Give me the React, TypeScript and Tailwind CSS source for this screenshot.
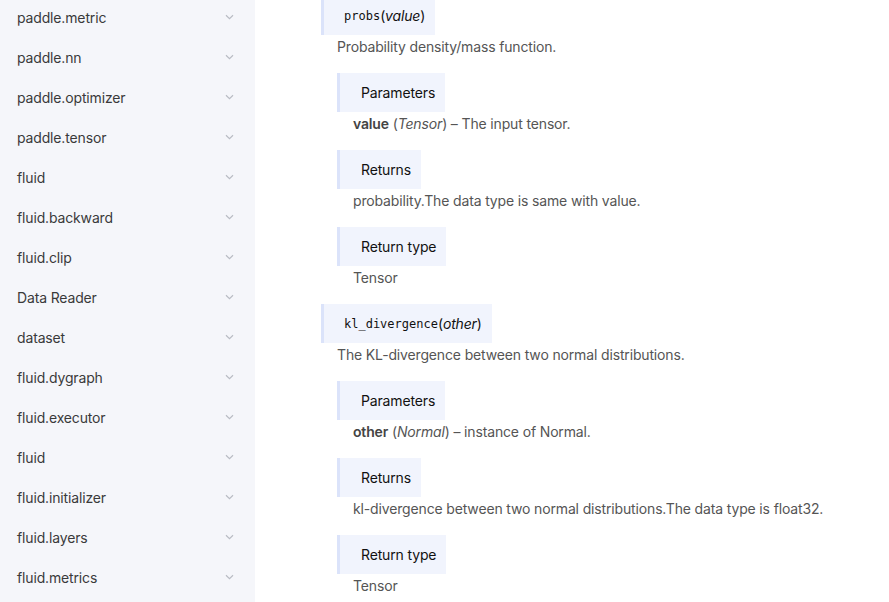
import React from "react";

const navItems = [
  "paddle.metric",
  "paddle.nn",
  "paddle.optimizer",
  "paddle.tensor",
  "fluid",
  "fluid.backward",
  "fluid.clip",
  "Data Reader",
  "dataset",
  "fluid.dygraph",
  "fluid.executor",
  "fluid",
  "fluid.initializer",
  "fluid.layers",
  "fluid.metrics",
];

function Chevron() {
  return (
    <svg width="9" height="6" viewBox="0 0 9 6" className="text-[#b9bcc4]">
      <path d="M1 1.2 L4.5 4.6 L8 1.2" fill="none" stroke="currentColor" strokeWidth="1.2" />
    </svg>
  );
}

function FieldBox({ children }: { children: React.ReactNode }) {
  return (
    <div className="flex">
      <div className="h-[39px] flex items-center border-l-[3px] border-[#dbe3fa] bg-[#f1f4fd] pl-[21px] pr-[10px] text-[14px] text-[#111]">
        {children}
      </div>
    </div>
  );
}

function Field({ label, children }: { label: string; children: React.ReactNode }) {
  return (
    <div className="mb-[14px]">
      <FieldBox>{label}</FieldBox>
      <div className="h-[24px] leading-[24px] pl-[16px] text-[14px] text-[#555]">{children}</div>
    </div>
  );
}

function Method({
  name,
  arg,
  desc,
  children,
}: {
  name: string;
  arg: string;
  desc: string;
  children: React.ReactNode;
}) {
  return (
    <div>
      <div className="flex">
        <div className="h-[39px] flex items-center border-l-[3px] border-[#dbe3fa] bg-[#f1f4fd] pl-[20px] pr-[10px] text-[14px] text-[#111]">
          <span className="font-['DejaVu_Sans_Mono',monospace] text-[12px] tracking-normal">{name}</span>
          <span>(</span>
          <em>{arg}</em>
          <span>)</span>
        </div>
      </div>
      <div className="h-[24px] leading-[24px] pl-[16px] text-[14px] text-[#555] mb-[14px]">{desc}</div>
      <div className="pl-[16px]">{children}</div>
    </div>
  );
}

export default function App() {
  return (
    <div className="flex h-[602px] w-[889px] overflow-hidden bg-white font-['Inter',sans-serif] tracking-[-0.15px]">
      <aside className="w-[255px] shrink-0 bg-[#f5f6fa]">
        <ul className="-mt-[3px]">
          {navItems.map((item, i) => (
            <li key={i} className="h-[40px] flex items-center justify-between pl-[17px] pr-[21px] text-[14px] text-[#3a3a3a]">
              <span>{item}</span>
              <Chevron />
            </li>
          ))}
        </ul>
      </aside>
      <main className="flex-1 pl-[66px] -mt-[4px]">
        <Method name="probs" arg="value" desc="Probability density/mass function.">
          <Field label="Parameters">
            <b className="font-semibold text-[#444]">value</b> (<em>Tensor</em>) – The input tensor.
          </Field>
          <Field label="Returns">probability.The data type is same with value.</Field>
          <Field label="Return type">Tensor</Field>
        </Method>
        <Method name="kl_divergence" arg="other" desc="The KL-divergence between two normal distributions.">
          <Field label="Parameters">
            <b className="font-semibold text-[#444]">other</b> (<em>Normal</em>) – instance of Normal.
          </Field>
          <Field label="Returns">kl-divergence between two normal distributions.The data type is float32.</Field>
          <Field label="Return type">Tensor</Field>
        </Method>
      </main>
    </div>
  );
}
